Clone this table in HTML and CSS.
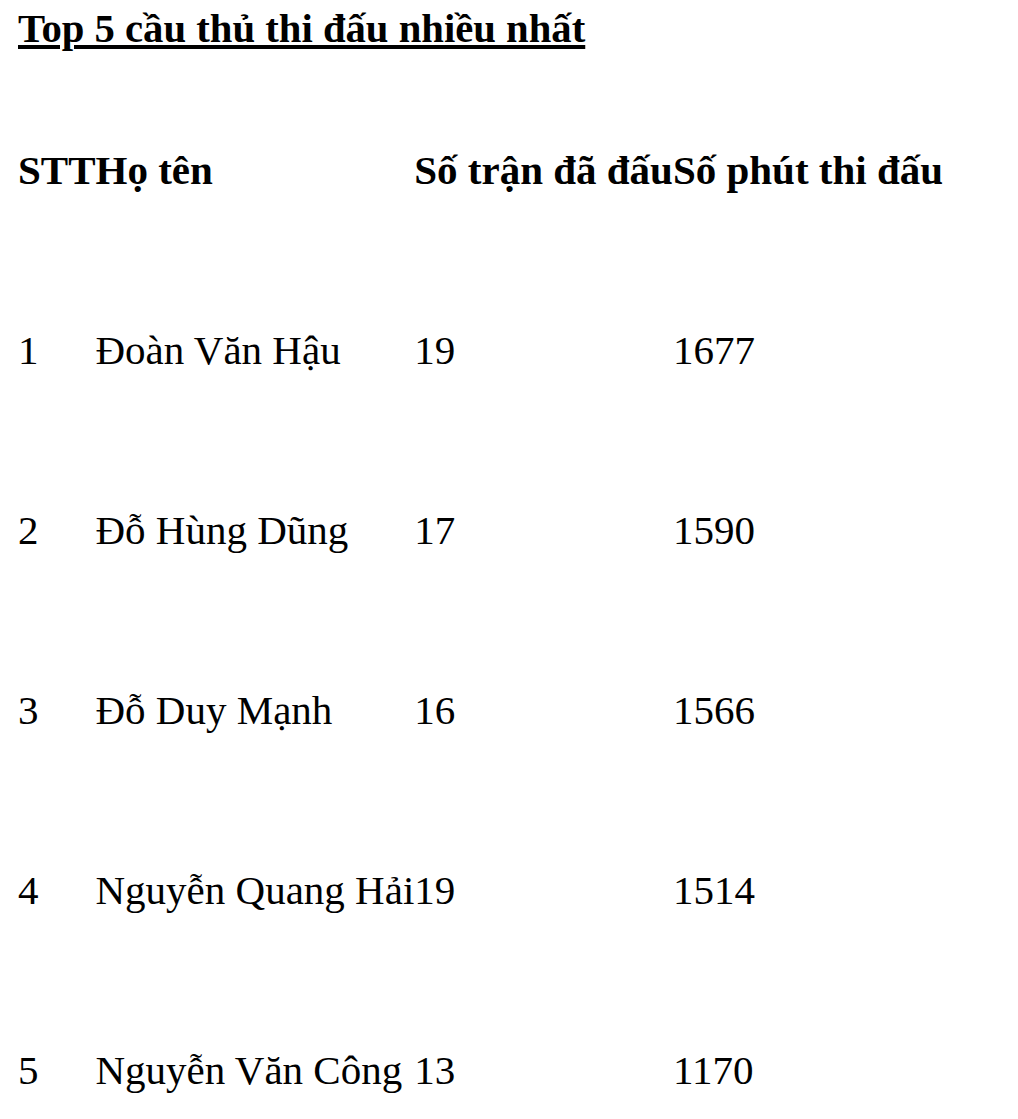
FILE: index.html
```html
<!DOCTYPE html>
<html lang="vi">
<head>
<meta charset="utf-8">
<title>Top 5 cầu thủ thi đấu nhiều nhất</title>
<link rel="stylesheet" href="styles.css">
</head>
<body>
<h1 class="title">Top 5 cầu thủ thi đấu nhiều nhất</h1>
<table class="players">
  <thead>
    <tr><th>STT</th><th>Họ tên</th><th>Số trận đã đấu</th><th>Số phút thi đấu</th></tr>
  </thead>
  <tbody>
    <tr><td>1</td><td>Đoàn Văn Hậu</td><td>19</td><td>1677</td></tr>
    <tr><td>2</td><td>Đỗ Hùng Dũng</td><td>17</td><td>1590</td></tr>
    <tr><td>3</td><td>Đỗ Duy Mạnh</td><td>16</td><td>1566</td></tr>
    <tr><td>4</td><td>Nguyễn Quang Hải</td><td>19</td><td>1514</td></tr>
    <tr><td>5</td><td>Nguyễn Văn Công</td><td>13</td><td>1170</td></tr>
  </tbody>
</table>
</body>
</html>
```
FILE: styles.css
```css
html, body {
  background: #fff;
}
body {
  margin: 0;
  padding: 0 18px;
  font-family: "Liberation Serif", "Times New Roman", serif;
  color: #000;
}
.title {
  margin: 6px 0 0;
  font-size: 40.7px;
  font-weight: bold;
  text-decoration: underline;
  line-height: 46px;
}
.players {
  border-collapse: collapse;
  border-spacing: 0;
  margin-top: 28px;
  font-size: 41px;
}
.players th,
.players td {
  padding: 0;
  height: 180px;
  vertical-align: middle;
  text-align: left;
  white-space: nowrap;
}
.players th {
  font-weight: bold;
}
```
